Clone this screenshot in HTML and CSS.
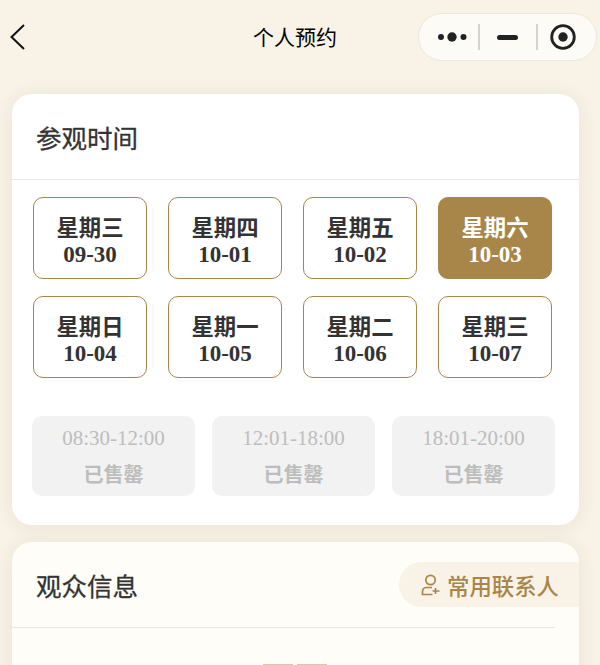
FILE: index.html
```html
<!DOCTYPE html>
<html lang="zh">
<head>
<meta charset="utf-8">
<title>个人预约</title>
<link rel="stylesheet" href="styles.css">
</head>
<body>
<div class="page">
  <header class="nav">
    <svg class="back" width="17" height="26" viewBox="0 0 17 26"><path d="M15 1 2.500 13 15 25" fill="none" stroke="#111" stroke-width="2"/></svg>
    <div class="nav-title">个人预约</div>
    <div class="capsule">
      <svg class="cap-dots" width="29" height="12" viewBox="0 0 29 12"><circle cx="3" cy="6" r="3" fill="#222"/><circle cx="14" cy="6" r="4.700" fill="#222"/><circle cx="25.500" cy="6" r="3" fill="#222"/></svg>
      <span class="cap-sep sep-a"></span>
      <span class="cap-minus"></span>
      <span class="cap-sep sep-b"></span>
      <svg class="cap-ring" width="26" height="26" viewBox="0 0 26 26"><circle cx="13" cy="13" r="11.300" fill="none" stroke="#222" stroke-width="2.800"/><circle cx="13" cy="13" r="4.700" fill="#222"/></svg>
    </div>
  </header>

  <section class="card">
    <div class="card-head"><h2 class="card-title">参观时间</h2></div>
    <div class="dates">
      <div class="date"><div class="week">星期三</div><div class="day">09-30</div></div>
      <div class="date"><div class="week">星期四</div><div class="day">10-01</div></div>
      <div class="date"><div class="week">星期五</div><div class="day">10-02</div></div>
      <div class="date active"><div class="week">星期六</div><div class="day">10-03</div></div>
      <div class="date"><div class="week">星期日</div><div class="day">10-04</div></div>
      <div class="date"><div class="week">星期一</div><div class="day">10-05</div></div>
      <div class="date"><div class="week">星期二</div><div class="day">10-06</div></div>
      <div class="date"><div class="week">星期三</div><div class="day">10-07</div></div>
    </div>
    <div class="slots">
      <div class="slot"><div class="slot-time">08:30-12:00</div><div class="slot-state">已售罄</div></div>
      <div class="slot"><div class="slot-time">12:01-18:00</div><div class="slot-state">已售罄</div></div>
      <div class="slot"><div class="slot-time">18:01-20:00</div><div class="slot-state">已售罄</div></div>
    </div>
  </section>

  <section class="card card-second">
    <div class="card-head second-head">
      <h2 class="card-title">观众信息</h2>
      <div class="contacts">
        <svg width="20" height="22" viewBox="0 0 20 22"><circle cx="9.500" cy="6" r="4.700" fill="none" stroke="#a8864a" stroke-width="1.700"/><path d="M11 13.500H5.500a4 4 0 0 0-4 4V20.500h10M14.500 14v6M11.500 17h7" fill="none" stroke="#a8864a" stroke-width="1.700"/></svg>
        <span>常用联系人</span>
      </div>
    </div>
    <div class="peek"><span class="peek-bar"></span><span class="peek-bar"></span></div>
  </section>
</div>
</body>
</html>
```
FILE: styles.css
```css
* { box-sizing: border-box; }
html, body { margin: 0; padding: 0; }
body {
  width: 600px;
  height: 665px;
  overflow: hidden;
  background: #f8f2e7;
  font-family: "Liberation Sans", "Noto Sans CJK SC", sans-serif;
}
.page { display: flex; flex-direction: column; height: 665px; overflow: hidden; }
.nav {
  position: relative;
  flex: none;
  height: 94px;
  display: flex;
  align-items: flex-start;
  padding: 24px 3px 0 9px;
}
.back { flex: none; }
.nav-title {
  position: absolute;
  left: 0;
  right: 10px;
  top: 23px;
  text-align: center;
  font-size: 21px;
  line-height: 26px;
  color: #000;
  font-family: "Noto Sans CJK SC", sans-serif;
}
.capsule {
  margin-left: auto;
  margin-top: -11px;
  width: 179px;
  height: 48px;
  display: flex;
  align-items: center;
  padding: 0 0 0 19px;
  background: #fdfbf6;
  border: 1px solid #ebe8e1;
  border-radius: 24px;
}
.cap-dots, .cap-ring { flex: none; }
.cap-sep { flex: none; width: 2px; height: 26px; background: #d4d2cd; }
.sep-a { margin: 0 17px 0 11px; }
.sep-b { margin: 0 12px 0 18px; }
.cap-minus { flex: none; width: 21px; height: 5px; border-radius: 2.500px; background: #222; }
.card {
  flex: none;
  margin: 0 21px 0 12px;
  background: #fff;
  border-radius: 20px;
  box-shadow: 0 2px 18px rgba(130, 105, 60, 0.11);
}
.card-head {
  height: 86px;
  display: flex;
  align-items: center;
  padding-left: 24px;
  border-bottom: 1px solid #e6e6e6;
}
.card-title {
  margin: 0;
  font-size: 25.500px;
  line-height: 34px;
  font-weight: 400;
  -webkit-text-stroke: 0.3px #333;
  color: #333;
  font-family: "Noto Sans CJK SC", sans-serif;
}
.dates {
  display: grid;
  grid-template-columns: repeat(4, 114px);
  grid-auto-rows: 82px;
  column-gap: 21px;
  row-gap: 17px;
  padding: 17px 0 0 21px;
}
.date {
  display: flex;
  flex-direction: column;
  align-items: center;
  justify-content: center;
  padding-top: 5px;
  border: 1px solid #a8864a;
  border-radius: 10px;
  color: #333;
  font-family: "Liberation Serif", "Noto Sans CJK SC", serif;
  font-weight: 700;
}
.date.active { background: #a8864a; color: #fff; }
.week { font-size: 22.400px; line-height: 27px; font-family: "Noto Sans CJK SC", sans-serif; margin-top: -1px; }
.day { font-size: 23px; line-height: 26px; margin-top: 2px; }
.slots {
  display: grid;
  grid-template-columns: repeat(3, 163px);
  column-gap: 17px;
  padding: 38px 0 29px 20px;
}
.slot {
  height: 80px;
  padding-top: 9px;
  border-radius: 10px;
  background: #f2f2f2;
  color: #bdbdbd;
  text-align: center;
}
.slot-time { font-family: "Liberation Serif", serif; font-size: 21px; line-height: 26px; }
.slot-state { margin-top: 9px; font-size: 20px; line-height: 27px; font-weight: 700; font-family: "Noto Sans CJK SC", sans-serif; }
.card-second { margin-top: 17px; height: 200px; background: #fffdf8; }
.second-head { position: relative; margin-right: 24px; }
.contacts {
  position: absolute;
  left: 387px;
  top: 20px;
  width: 180px;
  height: 45px;
  display: flex;
  align-items: center;
  gap: 6px;
  padding-left: 22px;
  border-radius: 23px 0 0 23px;
  background: #f8f2e7;
  color: #a8864a;
  font-size: 22.400px;
  font-weight: 500;
  font-family: "Noto Sans CJK SC", sans-serif;
  white-space: nowrap;
}
.peek { display: flex; gap: 4px; margin: 36px 0 0 251px; }
.peek-bar { width: 30px; height: 1px; background: #d9c9a6; }
```
